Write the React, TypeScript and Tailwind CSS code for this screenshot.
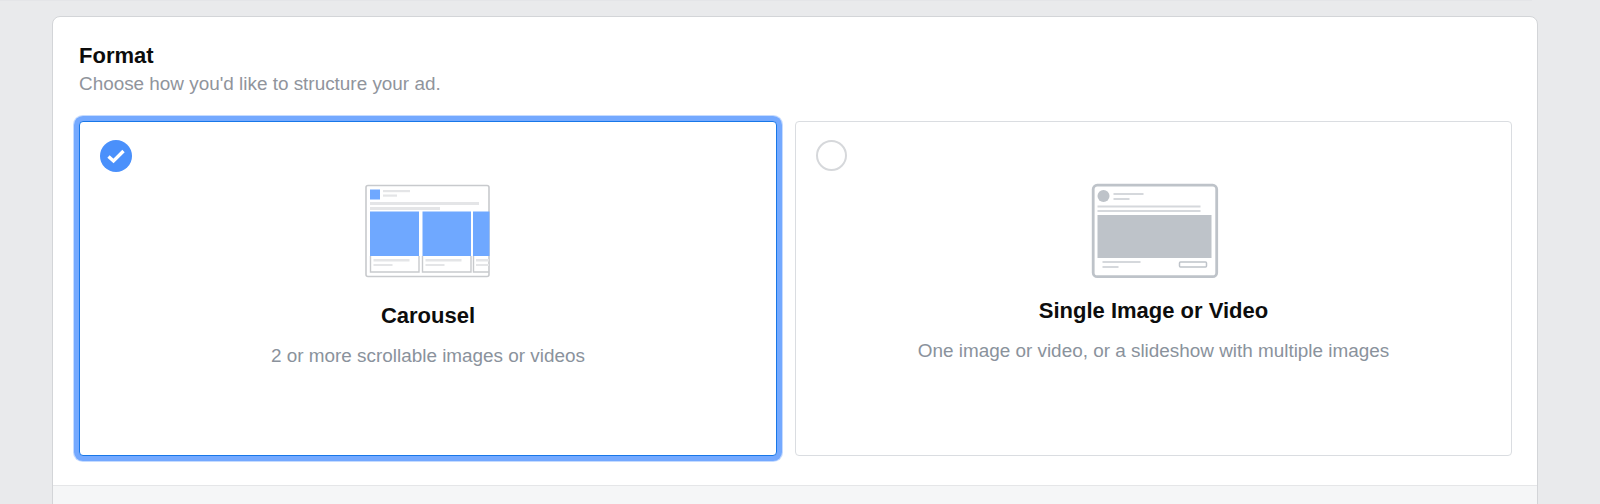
const F = '"Liberation Sans", Arial, sans-serif';

function CarouselArt() {
  const bar = "#e4e5e7";
  const blue = "#6fa8ff";
  const line = "#c8cacd";
  return (
    <svg width="126" height="96" viewBox="0 0 126 96" fill="none">
      <g transform="translate(0 1.5)">
        <rect x="1" y="1" width="123" height="91" rx="2" fill="#fff" stroke={line} strokeWidth="1.6" />
        <rect x="5" y="5" width="10" height="10" fill={blue} />
        <rect x="18" y="5.5" width="27" height="2.2" fill={bar} />
        <rect x="18" y="10" width="14" height="2.2" fill={bar} />
        <rect x="5" y="17.5" width="109" height="3" fill={bar} />
        <rect x="5" y="22.5" width="70" height="3" fill={bar} />
        <rect x="5" y="27" width="49" height="44.5" fill={blue} />
        <rect x="57.5" y="27" width="48.5" height="44.5" fill={blue} />
        <rect x="108" y="27" width="16.5" height="44.5" fill={blue} />
        <path d="M5.5 71.5V87.5H54V71.5M57.5 71.5V87.5H106V71.5M108.5 71.5V87.5H124" stroke={line} strokeWidth="1.4" />
        <rect x="8.5" y="74.5" width="36" height="2.5" fill={bar} />
        <rect x="8.5" y="79.5" width="19" height="2" fill={bar} />
        <rect x="60.5" y="74.5" width="36" height="2.5" fill={bar} />
        <rect x="60.5" y="79.5" width="19" height="2" fill={bar} />
        <rect x="111" y="74.5" width="13" height="2.5" fill={bar} />
        <rect x="111" y="79.5" width="13" height="2" fill={bar} />
      </g>
    </svg>
  );
}

function SingleArt() {
  const gray = "#bec3c9";
  const soft = "#d5d8dc";
  return (
    <svg width="130" height="96" viewBox="0 0 130 96" fill="none">
      <rect x="4.2" y="2.2" width="123.5" height="91.5" rx="4" fill="#fff" stroke={gray} strokeWidth="2.8" />
      <circle cx="14.5" cy="13" r="6" fill={gray} />
      <rect x="24.5" y="10" width="30" height="2" fill={soft} />
      <rect x="24.5" y="15" width="16" height="2" fill={soft} />
      <rect x="8.5" y="22.5" width="103" height="2" fill={soft} />
      <rect x="8.5" y="27" width="103" height="2" fill={soft} />
      <rect x="8.5" y="32" width="114" height="43" fill={gray} />
      <rect x="13.5" y="78" width="38" height="2" fill={soft} />
      <rect x="13.5" y="83" width="16" height="2" fill={soft} />
      <rect x="90.5" y="79" width="27" height="5" rx="1" fill="#fff" stroke={gray} strokeWidth="1.5" />
    </svg>
  );
}

function Option({
  selected,
  title,
  desc,
  art,
  className,
  titleClass,
}: {
  selected: boolean;
  title: string;
  desc: string;
  art: React.ReactNode;
  className: string;
  titleClass: string;
}) {
  return (
    <div className={className}>
      <div className="pl-[20px] pt-[18px] h-[50px]">
        {selected ? (
          <div className="w-[32px] h-[32px] rounded-full bg-[#4a90fb] flex items-center justify-center">
            <svg width="20" height="16" viewBox="0 0 20 16" fill="none">
              <path d="M2.5 8.5L7.5 13L17.5 3" stroke="#fff" strokeWidth="3.4" />
            </svg>
          </div>
        ) : (
          <div className="w-[31px] h-[31px] rounded-full border-2 border-[#d6d8db] bg-white" />
        )}
      </div>
      <div className="flex flex-col items-center">
        <div className="mt-[11px] h-[96px]">{art}</div>
        <div className={titleClass}>{title}</div>
        <div className="mt-[14px] text-[18.9px] leading-[24px] text-[#8a929c]">{desc}</div>
      </div>
    </div>
  );
}

export default function App() {
  return (
    <div className="w-[1600px] h-[504px] overflow-hidden bg-[#e9eaec] relative" style={{ fontFamily: F }}>
      <div className="h-[1px] w-[1532px] bg-[#e4e5e8]" />
      <div className="ml-[52px] mt-[15px] w-[1486px] h-[520px] bg-white border border-[#d3d5d8] rounded-t-[8px]">
        <div className="pl-[26px] pt-[25px] pr-[25px]">
          <div className="text-[22px] leading-[28px] font-bold text-[#0c0c0c]">Format</div>
          <div className="mt-[2px] text-[18.9px] leading-[24px] text-[#90949c]">Choose how you'd like to structure your ad.</div>
          <div className="mt-[25px] flex gap-[18px]">
            <Option
              selected
              title="Carousel"
              desc="2 or more scrollable images or videos"
              art={<CarouselArt />}
              titleClass="mt-[23px] text-[22px] leading-[28px] font-bold text-[#0d0d0d]"
              className="w-[698px] h-[335px] rounded-[4px] border border-[#1877e8] bg-white shadow-[0_0_0_5px_#74a9ff,0_0_0_6px_#c5dbff]"
            />
            <Option
              selected={false}
              title="Single Image or Video"
              desc="One image or video, or a slideshow with multiple images"
              art={<SingleArt />}
              titleClass="mt-[18px] text-[22px] leading-[28px] font-bold text-[#0d0d0d]"
              className="w-[717px] h-[335px] rounded-[4px] border border-[#dadde1] bg-white"
            />
          </div>
        </div>
        <div className="mt-[29px] border-t border-[#e5e6e8] bg-[#f5f6f7] h-[60px]" />
      </div>
    </div>
  );
}
